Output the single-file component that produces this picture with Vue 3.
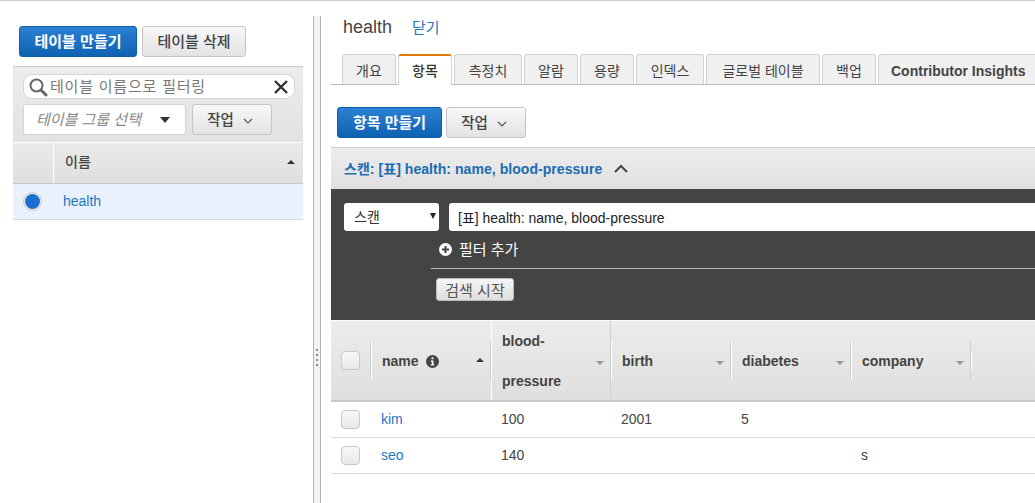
<script setup>
const tabs = ['개요', '항목', '측정치', '알람', '용량', '인덱스', '글로벌 테이블', '백업', 'Contributor Insights']
const cols = [
  { key: 'name', label: 'name', info: true, active: true },
  { key: 'bp', label: 'blood-pressure' },
  { key: 'birth', label: 'birth' },
  { key: 'diabetes', label: 'diabetes' },
  { key: 'company', label: 'company' }
]
const rows = [
  { name: 'kim', bp: '100', birth: '2001', diabetes: '5', company: '' },
  { name: 'seo', bp: '140', birth: '', diabetes: '', company: 's' }
]
</script>

<template>
  <div class="page">
    <aside class="left">
      <div class="left-actions">
        <button class="btn primary">테이블 만들기</button>
        <button class="btn plain">테이블 삭제</button>
      </div>
      <div class="filters">
        <div class="search">
          <svg width="20" height="20" viewBox="0 0 20 20" class="mag">
            <circle cx="8.5" cy="8.5" r="6" fill="none" stroke="#666" stroke-width="2" />
            <path d="M13 13l5 5" stroke="#666" stroke-width="3" stroke-linecap="round" />
          </svg>
          <span class="search-text">테이블 이름으로 필터링</span>
          <svg width="14" height="14" viewBox="0 0 14 14" class="clear">
            <path d="M1 1l12 12M13 1L1 13" stroke="#333" stroke-width="2.4" />
          </svg>
        </div>
        <div class="filter-row">
          <div class="group">
            <span>테이블 그룹 선택</span>
            <i class="caret-big"></i>
          </div>
          <button class="btn plain small-action">
            작업
            <svg width="10" height="6" viewBox="0 0 10 6"><path d="M1 1l4 4 4-4" fill="none" stroke="#555" stroke-width="1.2" /></svg>
          </button>
        </div>
      </div>
      <div class="ltable-head">
        <div class="lh-radio"></div>
        <div class="lh-name">이름<i class="sort up"></i></div>
      </div>
      <div class="ltable-row">
        <div class="radio"><span></span></div>
        <a class="link">health</a>
      </div>
    </aside>

    <div class="splitter">
      <div class="grip"><i></i><i></i><i></i><i></i></div>
    </div>

    <main class="right">
      <div class="title">
        <span class="title-name">health</span>
        <a class="close">닫기</a>
      </div>
      <div class="tabs">
        <div v-for="(t, i) in tabs" :key="t" class="tab" :class="{ active: i === 1, latin: i === 8 }">{{ t }}</div>
      </div>
      <div class="item-actions">
        <button class="btn primary item-create">항목 만들기</button>
        <button class="btn plain item-work">
          작업
          <svg width="10" height="6" viewBox="0 0 10 6"><path d="M1 1l4 4 4-4" fill="none" stroke="#555" stroke-width="1.2" /></svg>
        </button>
      </div>
      <div class="scan-head">
        <span class="scan-title">스캔: [표] health: name, blood-pressure</span>
        <svg width="14" height="9" viewBox="0 0 14 9"><path d="M1 8l6-6 6 6" fill="none" stroke="#444" stroke-width="2" /></svg>
      </div>
      <div class="scan-panel">
        <div class="scan-row">
          <div class="scan-select">스캔<i class="caret-small"></i></div>
          <div class="scan-input">[표] health: name, blood-pressure</div>
        </div>
        <div class="scan-body">
          <div class="add-filter">
            <svg width="13" height="13" viewBox="0 0 13 13">
              <circle cx="6.5" cy="6.5" r="6.5" fill="#fff" />
              <path d="M6.5 3v7M3 6.5h7" stroke="#444" stroke-width="2" />
            </svg>
            필터 추가
          </div>
          <div class="start-row"><button class="start">검색 시작</button></div>
        </div>
      </div>
      <div class="grid grid-head">
        <div class="cell check-cell"><span class="check"></span></div>
        <div v-for="c in cols" :key="c.key" class="cell hcell">
          <span class="hlabel" :class="{ wrap: c.key === 'bp' }">{{ c.label }}</span>
          <svg v-if="c.info" class="info" width="13" height="13" viewBox="0 0 14 14">
            <circle cx="7" cy="7" r="7" fill="#444" />
            <rect x="6" y="2.5" width="2" height="2" fill="#fff" />
            <path d="M5.2 6h2.8v4h1v1.4H5.2V10h1V7.2h-1z" fill="#fff" />
          </svg>
          <i class="sort" :class="c.active ? 'up' : 'down'"></i>
        </div>
        <div class="cell hcell hend"></div>
      </div>
      <div v-for="r in rows" :key="r.name" class="grid grid-row">
        <div class="cell check-cell"><span class="check"></span></div>
        <div class="cell"><a class="link">{{ r.name }}</a></div>
        <div class="cell">{{ r.bp }}</div>
        <div class="cell">{{ r.birth }}</div>
        <div class="cell">{{ r.diabetes }}</div>
        <div class="cell">{{ r.company }}</div>
      </div>
    </main>
  </div>
</template>

<style>
html, body { margin: 0; background: #fff; overflow: hidden; }
</style>

<style scoped>
.page {
  display: flex;
  width: 1035px;
  height: 503px;
  box-sizing: border-box;
  border-top: 1px solid #ccc;
  overflow: hidden;
  font: 14px "Liberation Sans", "Noto Sans CJK KR", sans-serif;
  color: #444;
}
button { font-family: inherit; cursor: pointer; }
.left { width: 290px; margin-left: 13px; flex: none; }
.left-actions { display: flex; gap: 5px; padding: 25px 0 0 6px; height: 40px; }
.btn {
  height: 31px;
  box-sizing: border-box;
  border-radius: 3px;
  font-size: 15px;
  padding: 0 0 3px;
  white-space: nowrap;
}
.primary {
  width: 118px;
  border: 1px solid #0f5fa8;
  background: linear-gradient(#2a80d2, #0f62b2);
  color: #fff;
  font-weight: 700;
}
.plain {
  width: 104px;
  border: 1px solid #c4c4c4;
  background: linear-gradient(#f7f7f7, #e3e3e3);
  color: #444;
  font-weight: 500;
}
.filters {
  height: 76px;
  box-sizing: border-box;
  background: linear-gradient(#ececec, #e2e2e2);
  border-top: 1px solid #ccc;
  padding: 7px 0 0 10px;
}
.search {
  width: 272px;
  height: 25px;
  box-sizing: border-box;
  background: #fff;
  border: 1px solid #d5d5d5;
  border-radius: 9px;
  display: flex;
  align-items: center;
  padding: 0 4px;
  color: #777;
  font-size: 15px;
  letter-spacing: .8px;
}
.search-text { margin: -3px 0 0 2px; flex: 1; }
.mag { flex: none; margin-top: 1px; }
.clear { flex: none; margin: 1px 2px 0 0; }
.filter-row { display: flex; gap: 6px; margin-top: 5px; }
.group {
  width: 163px;
  height: 31px;
  box-sizing: border-box;
  background: #fff;
  border: 1px solid #d5d5d5;
  border-radius: 3px;
  display: flex;
  align-items: center;
  justify-content: space-between;
  padding: 0 15px 3px 12px;
  font-style: italic;
  color: #888;
  font-size: 15px;
}
.caret-big { border: 5px solid transparent; border-top: 6px solid #333; border-bottom: 0; width: 0; height: 0; margin-top: 3px; }
.small-action { width: 80px; height: 31px; font-size: 14.5px; padding-right: 4px; }
.small-action svg, .item-work svg { margin-left: 5px; vertical-align: 1px; }
.ltable-head {
  display: flex;
  height: 42px;
  box-sizing: border-box;
  background: linear-gradient(#eaeaea, #dfdfdf);
  border-top: 1px solid #fff;
  border-bottom: 1px solid #c8c8c8;
}
.lh-radio { width: 40px; border-right: 1px solid #fff; }
.lh-name {
  flex: 1;
  position: relative;
  padding-left: 11px;
  line-height: 38px;
  color: #444;
  font-weight: 500;
  border-right: 1px solid #e0e0e0;
  font-size: 14px;
}
.sort { position: absolute; width: 0; height: 0; border: 4px solid transparent; }
.sort.up { border-top: 0; border-bottom: 4px solid #333; right: 7px; top: 17px; }
.sort.down { border-bottom: 0; border-top: 4px solid #999; right: 7px; top: 40px; }
.ltable-row {
  height: 36px;
  box-sizing: border-box;
  display: flex;
  align-items: center;
  background: #e9f1fc;
  border-bottom: 1px solid #dcdcdc;
}
.radio {
  width: 19px;
  height: 19px;
  margin-left: 10px;
  box-sizing: border-box;
  border: 1px solid #c8c8c8;
  border-radius: 50%;
  background: #f2f2f2;
  display: flex;
  align-items: center;
  justify-content: center;
}
.radio span { width: 15px; height: 15px; border-radius: 50%; background: #1a6fd0; }
.ltable-row .link { margin-left: 21px; margin-top: -2px; }
.link { color: #1f78c0; font-size: 14px; }
.splitter {
  flex: none;
  width: 8px;
  margin: 15px 0 0 10px;
  box-sizing: border-box;
  background: #f2f2f2;
  border-left: 1px solid #b5b5b5;
  border-right: 1px solid #b5b5b5;
  position: relative;
}
.grip { position: absolute; left: 2px; top: 333px; display: flex; flex-direction: column; gap: 3px; }
.grip i { display: block; width: 2px; height: 2px; background: #888; }
.right { flex: none; margin-left: 10px; width: 704px; overflow: hidden; }
.title { height: 53px; box-sizing: border-box; padding: 15px 0 0 12px; display: flex; align-items: baseline; }
.title-name { font-size: 18px; color: #444; }
.close { margin-left: 20px; color: #1f78c0; font-size: 15px; }
.tabs {
  display: flex;
  gap: 2px;
  height: 31px;
  box-sizing: border-box;
  border-bottom: 1px solid #bbb;
  padding-left: 11px;
  white-space: nowrap;
}
.tab {
  width: 54px;
  height: 30px;
  box-sizing: border-box;
  flex: none;
  text-align: center;
  background: #f0f0f0;
  border: 1px solid #d2d2d2;
  border-bottom: 0;
  border-radius: 3px 3px 0 0;
  line-height: 33px;
  font-size: 14px;
  color: #444;
}
.tab:nth-child(3), .tab:nth-child(6) { width: 68px; }
.tab:nth-child(7) { width: 114px; }
.tab.latin { font-weight: 700; padding-left: 12px; width: 300px; text-align: left; }
.tab.active {
  height: 31px;
  background: #fff;
  border-top: 2px solid #e07b00;
  color: #333;
  font-weight: 500;
  line-height: 31px;
}
.item-actions { display: flex; gap: 4px; padding: 22px 0 0 6px; height: 40px; }
.item-create { width: 105px; }
.item-work { width: 80px; font-size: 14.5px; padding-right: 4px; }
.scan-head {
  height: 42px;
  box-sizing: border-box;
  display: flex;
  align-items: center;
  gap: 12px;
  padding-left: 13px;
  border-top: 1px solid #ccc;
  background: linear-gradient(#ececec, #e0e0e0);
}
.scan-title { color: #1a6cb3; font-weight: 700; font-size: 14px; letter-spacing: .05px; margin-top: -2px; }
.scan-panel { height: 131px; box-sizing: border-box; background: #444; padding-top: 14px; }
.scan-row { display: flex; gap: 10px; padding-left: 13px; }
.scan-select {
  width: 95px;
  height: 28px;
  box-sizing: border-box;
  background: #fff;
  border-radius: 3px;
  padding-left: 10px;
  line-height: 28px;
  color: #333;
  position: relative;
}
.caret-small {
  position: absolute;
  right: 3px;
  top: 10px;
  width: 0;
  height: 0;
  border: 3.5px solid transparent;
  border-top: 6px solid #222;
  border-bottom: 0;
}
.scan-input {
  flex: 1;
  height: 28px;
  box-sizing: border-box;
  background: #fff;
  border-radius: 3px 0 0 3px;
  padding-left: 9px;
  line-height: 30px;
  color: #222;
}
.scan-body { margin-left: 100px; }
.add-filter {
  display: flex;
  align-items: center;
  gap: 7px;
  height: 38px;
  box-sizing: border-box;
  padding: 0 0 2px 8px;
  border-bottom: 1px solid #bbb;
  color: #fff;
  font-size: 15px;
}
.add-filter svg { margin-top: 2px; }
.start-row { padding: 9px 0 0 5px; }
.start {
  width: 78px;
  height: 23px;
  padding: 0 0 2px;
  border: 1px solid #bbb;
  border-radius: 3px;
  background: linear-gradient(#f6f6f6, #dedede);
  color: #555;
  font-size: 15px;
}
.grid {
  display: grid;
  grid-template-columns: 40px repeat(5, 120px) 1fr;
  border-bottom: 1px solid #ddd;
}
.grid-head {
  height: 81px;
  box-sizing: border-box;
  margin-top: 1px;
  background: linear-gradient(#ececec, #dfdfdf);
  border-bottom: 2px solid #c9c9c9;
}
.grid-row { height: 36px; box-sizing: border-box; align-items: center; }
.grid-row .cell { margin-top: -2px; }
.grid-row .check-cell { margin-top: 0; }
.grid-head .cell { height: 79px; align-self: stretch; }
.cell { padding-left: 10px; font-size: 14px; color: #444; box-sizing: border-box; }
.check-cell { padding: 0 0 0 10px; display: flex; align-items: center; }
.check {
  width: 19px;
  height: 19px;
  box-sizing: border-box;
  border: 1px solid #c8c8c8;
  border-radius: 4px;
  background: linear-gradient(#f8f8f8, #e8e8e8);
}
.hcell {
  position: relative;
  display: flex;
  align-items: center;
  padding-left: 11px;
}
.hcell::before, .hcell::after {
  content: "";
  position: absolute;
  top: 20px;
  height: 40px;
  border-left: 1px solid #cfcfcf;
}
.hcell::before { left: -1px; }
.hcell::after { left: 0; border-left-color: #fff; }
.hcell:nth-child(3)::after { top: 0; height: 79px; }
.hcell:nth-child(4)::before { top: 0; height: 79px; }
.hend::after { top: 31px; height: 18px; }
.hlabel { font-weight: 700; color: #444; font-size: 14px; }
.hlabel.wrap { width: 70px; line-height: 40px; }
.info { margin: 2px 0 0 7px; }
.hcell .sort.up { right: 7px; top: 37px; }
</style>
